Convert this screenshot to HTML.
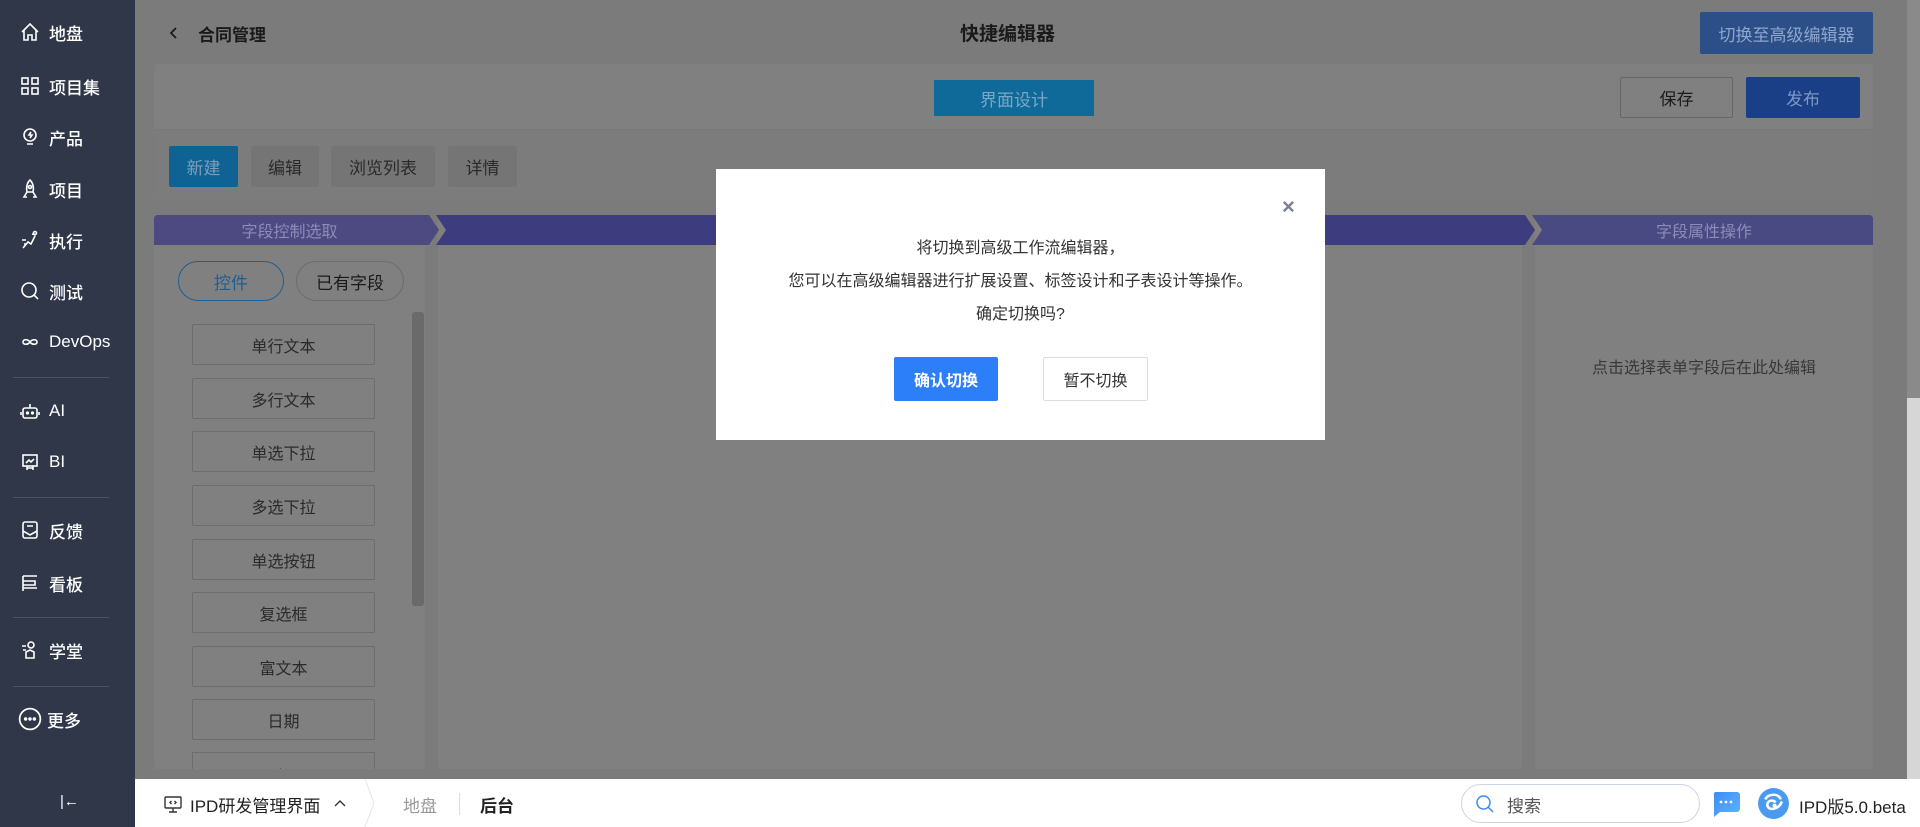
<!DOCTYPE html>
<html><head><meta charset="utf-8"><style>
*{margin:0;padding:0;box-sizing:border-box}
body{width:1920px;height:827px;overflow:hidden;position:relative;background:#7b7b7b;font-family:"Liberation Sans","Noto Sans CJK SC",sans-serif;color:#222}
.a{position:absolute}
.side{left:0;top:0;width:135px;height:827px;background:#2f3749}
.si{position:absolute;left:20px;height:24px;display:flex;align-items:center;color:#fff;font-size:17px;font-weight:500}
.si svg{width:20px;height:20px;margin-right:9px;fill:none;stroke:#fff;stroke-width:1.6}
.dv{position:absolute;left:13px;width:96px;height:1px;background:#4a5366}
.pn{background:#808080;border-radius:4px}
.btn{position:absolute;display:flex;align-items:center;justify-content:center;font-size:17px;border-radius:2px}
.item{position:absolute;left:192px;width:183px;height:41px;border:1px solid #6d6d6d;border-radius:2px;display:flex;align-items:center;justify-content:center;font-size:16px;color:#2a2a2a}
.hd{position:absolute;top:215px;height:30px;color:#8d8bb8;font-size:16px;display:flex;align-items:center;justify-content:center}
</style></head><body>
<div class="a side">
 <div class="si" style="top:20px"><svg viewBox="0 0 20 20"><path d="M2 10L10 2l8 8M4 8v10h4v-5h4v5h4V8"/></svg>地盘</div>
 <div class="si" style="top:74px"><svg viewBox="0 0 20 20"><rect x="2" y="2" width="6" height="6"/><rect x="12" y="2" width="6" height="6"/><rect x="2" y="12" width="6" height="6"/><rect x="12" y="12" width="6" height="6"/></svg>项目集</div>
 <div class="si" style="top:125px"><svg viewBox="0 0 20 20"><circle cx="10" cy="8" r="6"/><path d="M7 17h6M11 5l-2 3h3l-2 3"/></svg>产品</div>
 <div class="si" style="top:177px"><svg viewBox="0 0 20 20"><path d="M10 1c3 3 4 7 3 12H7C6 8 7 4 10 1zM7 13l-3 5h3M13 13l3 5h-3"/><circle cx="10" cy="8" r="1.5"/></svg>项目</div>
 <div class="si" style="top:228px"><svg viewBox="0 0 20 20"><path d="M3 18l5-6 3 2 4-8M12 4l4 1M2 10h4M4 14h3"/><circle cx="15" cy="3" r="1.5"/></svg>执行</div>
 <div class="si" style="top:279px"><svg viewBox="0 0 20 20"><circle cx="9" cy="9" r="7"/><path d="M14 14l4 4"/></svg>测试</div>
 <div class="si" style="top:330px"><svg viewBox="0 0 20 20"><path d="M10 10c-2-3-7-3-7 0s5 3 7 0c2-3 7-3 7 0s-5 3-7 0"/></svg>DevOps</div>
 <div class="dv" style="top:377px"></div>
 <div class="si" style="top:399px"><svg viewBox="0 0 20 20"><rect x="3" y="7" width="14" height="10" rx="2"/><path d="M10 3v4M1 11v3M19 11v3"/><circle cx="7.5" cy="12" r=".8"/><circle cx="12.5" cy="12" r=".8"/></svg>AI</div>
 <div class="si" style="top:450px"><svg viewBox="0 0 20 20"><rect x="3" y="3" width="14" height="11"/><path d="M6 11l3-3 2 2 3-3M7 14v4M13 14v4M7 16h6"/></svg>BI</div>
 <div class="dv" style="top:497px"></div>
 <div class="si" style="top:518px"><svg viewBox="0 0 20 20"><rect x="3" y="2" width="14" height="16" rx="2"/><path d="M3 11l7 4 7-4M7 6h6"/></svg>反馈</div>
 <div class="si" style="top:571px"><svg viewBox="0 0 20 20"><path d="M3 3h14M3 3v15M3 8h12v4H3M3 15h14"/></svg>看板</div>
 <div class="dv" style="top:617px"></div>
 <div class="si" style="top:638px"><svg viewBox="0 0 20 20"><circle cx="11" cy="5" r="3"/><path d="M6 18v-6l4-2 4 2v6zM2 6h4M3 10h3"/></svg>学堂</div>
 <div class="dv" style="top:686px"></div>
 <div class="si" style="top:707px"><svg viewBox="0 0 22 22" style="width:24px;height:24px;margin-left:-2px;margin-right:5px"><circle cx="11" cy="11" r="9.5"/><circle cx="7" cy="11" r=".8" fill="#fff"/><circle cx="11" cy="11" r=".8" fill="#fff"/><circle cx="15" cy="11" r=".8" fill="#fff"/></svg>更多</div>
 <div class="a" style="left:60px;top:793px;color:#fff;font-size:15px">|&#8592;</div>
</div>

<svg class="a" style="left:169px;top:26px" width="10" height="14" viewBox="0 0 10 14"><path d="M7 2L2 7l5 5" fill="none" stroke="#1a1a1a" stroke-width="1.8"/></svg>
<div class="a" style="left:198px;top:21px;font-size:17px;font-weight:bold;color:#1a1a1a">合同管理</div>
<div class="a" style="left:940px;top:19px;font-size:19px;font-weight:bold;color:#1a1a1a;width:135px;text-align:center">快捷编辑器</div>
<div class="btn" style="left:1700px;top:12px;width:173px;height:42px;background:#2c4f87;color:#8ea6cc">切换至高级编辑器</div>

<div class="a pn" style="left:154px;top:64px;width:1719px;height:66px;border-bottom:1px solid #777"></div>
<div class="btn" style="left:934px;top:80px;width:160px;height:36px;background:#0f6a99;color:#7aa7c6;border-radius:0">界面设计</div>
<div class="btn" style="left:1620px;top:77px;width:113px;height:41px;border:1px solid #666;color:#1a1a1a">保存</div>
<div class="btn" style="left:1746px;top:77px;width:114px;height:41px;background:#1a3f86;color:#7f96c4">发布</div>

<div class="a pn" style="left:154px;top:131px;width:1719px;height:67px;background:#7c7c7c"></div>
<div class="btn" style="left:169px;top:146px;width:69px;height:41px;background:#0f6294;color:#7aa0bd">新建</div>
<div class="btn" style="left:251px;top:146px;width:68px;height:41px;background:#757575;color:#2a2a2a">编辑</div>
<div class="btn" style="left:331px;top:146px;width:104px;height:41px;background:#757575;color:#2a2a2a">浏览列表</div>
<div class="btn" style="left:448px;top:146px;width:69px;height:41px;background:#757575;color:#2a2a2a">详情</div>

<div class="a pn" style="left:154px;top:215px;width:271px;height:554px"></div>
<div class="a pn" style="left:438px;top:215px;width:1084px;height:554px"></div>
<div class="a pn" style="left:1535px;top:215px;width:338px;height:554px"></div>
<svg class="a" style="left:154px;top:215px" width="1719" height="30">
<path d="M0 4Q0 0 4 0H275L285 15L275 30H0Z" fill="#4c4a80"/>
<path d="M282 0H1371L1381 15L1371 30H282L292 15Z" fill="#3c3c7e"/>
<path d="M1378 0H1715Q1719 0 1719 4V30H1378L1388 15Z" fill="#4a4a82"/>
</svg>
<div class="hd" style="left:154px;width:271px">字段控制选取</div>
<div class="hd" style="left:1535px;width:338px">字段属性操作</div>

<div class="btn" style="left:178px;top:261px;width:106px;height:40px;border:1px solid #1a5f96;border-radius:20px;color:#1a5f96">控件</div>
<div class="btn" style="left:296px;top:261px;width:108px;height:40px;border:1px solid #6d6d6d;border-radius:20px;color:#1a1a1a">已有字段</div>
<div class="a" style="left:412px;top:312px;width:12px;height:294px;background:#6a6a6a;border-radius:3px"></div>
<div class="item" style="top:324px">单行文本</div>
<div class="item" style="top:378px">多行文本</div>
<div class="item" style="top:431px">单选下拉</div>
<div class="item" style="top:485px">多选下拉</div>
<div class="item" style="top:539px">单选按钮</div>
<div class="item" style="top:592px">复选框</div>
<div class="item" style="top:646px">富文本</div>
<div class="item" style="top:699px">日期</div>
<div class="a" style="left:192px;top:752px;width:183px;height:17px;overflow:hidden;border:1px solid #6d6d6d;border-bottom:none"><div style="text-align:center;font-size:16px;padding-top:10px;color:#2a2a2a">时间</div></div>
<div class="a" style="left:1535px;top:354px;width:338px;text-align:center;font-size:16px;color:#383838">点击选择表单字段后在此处编辑</div>

<div class="a" style="left:1907px;top:0;width:13px;height:398px;background:#8a8a8a"></div>
<div class="a" style="left:1907px;top:398px;width:13px;height:381px;background:#d6d6d6"></div>

<div class="a" style="left:716px;top:169px;width:609px;height:271px;background:#fff">
 <div class="a" style="left:566px;top:25px;font-size:22px;color:#7a7f91;font-weight:bold">×</div>
 <div class="a" style="left:0;top:63px;width:609px;text-align:center;font-size:16px;line-height:33px;color:#333">将切换到高级工作流编辑器，<br>您可以在高级编辑器进行扩展设置、标签设计和子表设计等操作。<br>确定切换吗?</div>
 <div class="btn" style="left:178px;top:188px;width:104px;height:44px;background:#2d7ff9;color:#fff;font-weight:bold;font-size:16px">确认切换</div>
 <div class="btn" style="left:327px;top:188px;width:105px;height:44px;border:1px solid #ddd;color:#333;font-size:16px">暂不切换</div>
</div>

<div class="a" style="left:135px;top:779px;width:1785px;height:48px;background:#fff">
 <svg class="a" style="left:28px;top:15px" width="20" height="20" viewBox="0 0 20 20" fill="none" stroke="#333" stroke-width="1.4"><rect x="2" y="3" width="16" height="11" rx="1"/><path d="M10 14v4M6 18h8M8.5 7l-1.5 1.5 1.5 1.5M11.5 7l1.5 1.5-1.5 1.5"/></svg>
 <div class="a" style="left:55px;top:13px;font-size:17px;color:#222">IPD研发管理界面</div>
 <svg class="a" style="left:199px;top:20px" width="12" height="8" viewBox="0 0 12 8"><path d="M1 7l5-5 5 5" fill="none" stroke="#333" stroke-width="1.4"/></svg>
 <svg class="a" style="left:229px;top:0" width="12" height="48"><path d="M1 0L10 24L1 48" fill="none" stroke="#e5e5e5"/></svg>
 <div class="a" style="left:268px;top:13px;font-size:17px;color:#999">地盘</div>
 <div class="a" style="left:324px;top:14px;width:1px;height:22px;background:#ddd"></div>
 <div class="a" style="left:345px;top:13px;font-size:17px;color:#222;font-weight:bold">后台</div>
 <div class="a" style="left:1326px;top:5px;width:239px;height:39px;border:1px solid #cdd3e6;border-radius:20px"></div>
 <svg class="a" style="left:1340px;top:15px" width="20" height="20" viewBox="0 0 20 20" fill="none" stroke="#3d8bf2" stroke-width="1.5"><circle cx="8.5" cy="8.5" r="6.5"/><path d="M13 13l5 5"/></svg>
 <div class="a" style="left:1372px;top:13px;font-size:17px;color:#555">搜索</div>
 <svg class="a" style="left:1576px;top:11px" width="30" height="28" viewBox="0 0 30 28"><defs><linearGradient id="g" x1="0" y1="0" x2="1" y2="1"><stop offset="0" stop-color="#3d8bf2"/><stop offset="1" stop-color="#5fb6ff"/></linearGradient></defs><path d="M4 2h22a3 3 0 0 1 3 3v14a3 3 0 0 1-3 3H9l-6 5V5a3 3 0 0 1 1-3z" fill="url(#g)"/><circle cx="10" cy="12" r="1.4" fill="#fff"/><circle cx="15" cy="12" r="1.4" fill="#fff"/><circle cx="20" cy="12" r="1.4" fill="#fff"/></svg>
 <svg class="a" style="left:1622px;top:8px" width="33" height="33" viewBox="0 0 32 32"><circle cx="16" cy="16" r="15" fill="#4a9af0"/><path d="M8 12c3-6 13-6 15 0M24 14c-2 8-14 10-14 3 0-4 6-5 8-2" fill="none" stroke="#fff" stroke-width="2.5"/><circle cx="17" cy="18" r="2" fill="#fff"/></svg>
 <div class="a" style="left:1664px;top:14px;font-size:17px;color:#222">IPD版5.0.beta</div>
</div>
</body></html>
